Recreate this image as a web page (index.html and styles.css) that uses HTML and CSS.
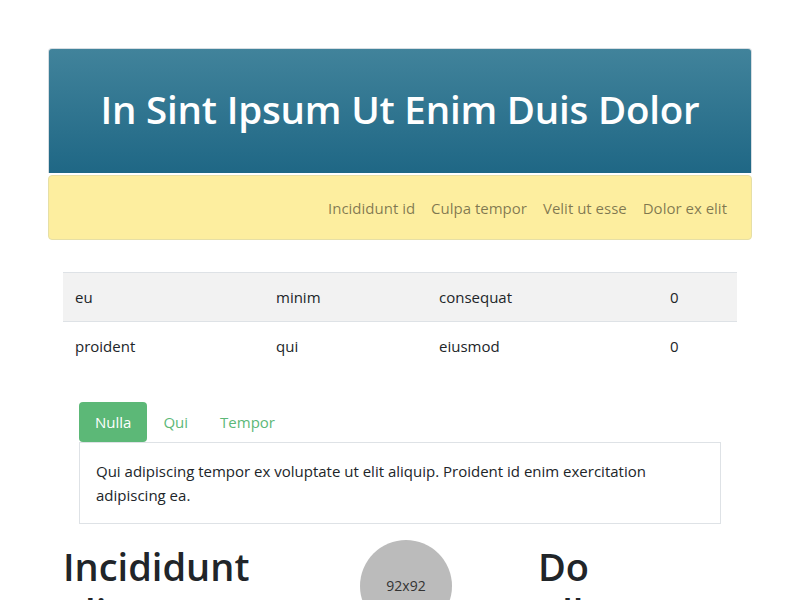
FILE: index.html
```html
<!DOCTYPE html>
<html>
<head>
<meta charset="utf-8">
<link rel="stylesheet" href="styles.css">
</head>
<body>
<div class="container">
  <header class="hero">
    <h1 class="hero-title">In Sint Ipsum Ut Enim Duis Dolor</h1>
  </header>
  <nav class="navbar">
    <a class="nav-link" href="#">Incididunt id</a>
    <a class="nav-link" href="#">Culpa tempor</a>
    <a class="nav-link" href="#">Velit ut esse</a>
    <a class="nav-link" href="#">Dolor ex elit</a>
  </nav>
  <div class="content">
    <table class="table">
      <colgroup>
        <col class="c1"><col class="c2"><col class="c3"><col class="c4">
      </colgroup>
      <tbody>
        <tr class="striped"><td>eu</td><td>minim</td><td>consequat</td><td>0</td></tr>
        <tr><td>proident</td><td>qui</td><td>eiusmod</td><td>0</td></tr>
      </tbody>
    </table>
    <div class="tabs">
      <ul class="tab-list">
        <li><a class="tab active" href="#">Nulla</a></li>
        <li><a class="tab" href="#">Qui</a></li>
        <li><a class="tab" href="#">Tempor</a></li>
      </ul>
      <div class="tab-pane">Qui adipiscing tempor ex voluptate ut elit aliquip. Proident id enim exercitation adipiscing ea.</div>
    </div>
    <div class="feature-row">
      <h2 class="feature-title">Incididunt aliqua</h2>
      <div class="feature-media"><div class="avatar">92x92</div></div>
      <h2 class="feature-title">Do ullamco elit</h2>
    </div>
  </div>
</div>
</body>
</html>
```
FILE: styles.css
```css
* { box-sizing: border-box; }
html, body { margin: 0; padding: 0; }
body {
  font-family: "Open Sans", "Noto Sans", sans-serif;
  font-size: 16px;
  line-height: 24px;
  color: #212529;
  background: #fff;
}
.container {
  width: 704px;
  margin: 48px auto 0;
}
.hero {
  height: 125px;
  border: 1px solid #d6dde2;
  border-bottom: none;
  border-radius: 4px 4px 0 0;
  background: linear-gradient(to bottom, #41839b, #1f6785);
  display: flex;
  align-items: center;
  justify-content: center;
  padding-bottom: 4px;
}
.hero-title {
  margin: 0;
  color: #fff;
  font-size: 38.5px;
  font-weight: 600;
  line-height: 1.2;
  letter-spacing: -0.2px;
}
.navbar {
  margin-top: 2px;
  height: 65px;
  border: 1px solid #e6dfa6;
  border-radius: 4px;
  background: #fdee9f;
  display: flex;
  justify-content: flex-end;
  align-items: center;
  padding: 0 16px;
}
.nav-link {
  color: rgba(0, 0, 0, 0.5);
  text-decoration: none;
  padding: 8px 8px;
  font-size: 15px;
}
.content {
  padding: 0 15px;
}
.table {
  width: 100%;
  margin-top: 32px;
  border-collapse: collapse;
  table-layout: fixed;
}
.c1 { width: 201px; }
.c2 { width: 163px; }
.c3 { width: 231px; }
.c4 { width: auto; }
.table td {
  padding: 12px;
  line-height: 24px;
  border-top: 1px solid #dee2e6;
  font-size: 15px;
}
.striped td { background: #f2f2f2; }
.tabs {
  margin: 32px 16px 0;
}
.tab-list {
  list-style: none;
  margin: 0;
  padding: 0;
  display: flex;
}
.tab {
  display: block;
  padding: 8px 16px;
  line-height: 24px;
  color: #5cb877;
  text-decoration: none;
  border-radius: 4px;
  font-size: 15px;
}
.tab.active {
  background: #5cb877;
  color: #fff;
}
.tab-pane {
  border: 1px solid #dee2e6;
  padding: 16px;
  line-height: 24px;
  font-size: 15px;
}
.feature-row {
  margin-top: 16px;
  display: grid;
  grid-template-columns: 297px 178px 1fr;
  align-items: start;
}
.feature-title {
  margin: 0;
  font-size: 38px;
  font-weight: 600;
  line-height: 1.2;
  padding-top: 4px;
}
.avatar {
  width: 92px;
  height: 92px;
  border-radius: 50%;
  background: #bbbbbb;
  color: #333;
  font-size: 14px;
  display: flex;
  align-items: center;
  justify-content: center;
}
```
